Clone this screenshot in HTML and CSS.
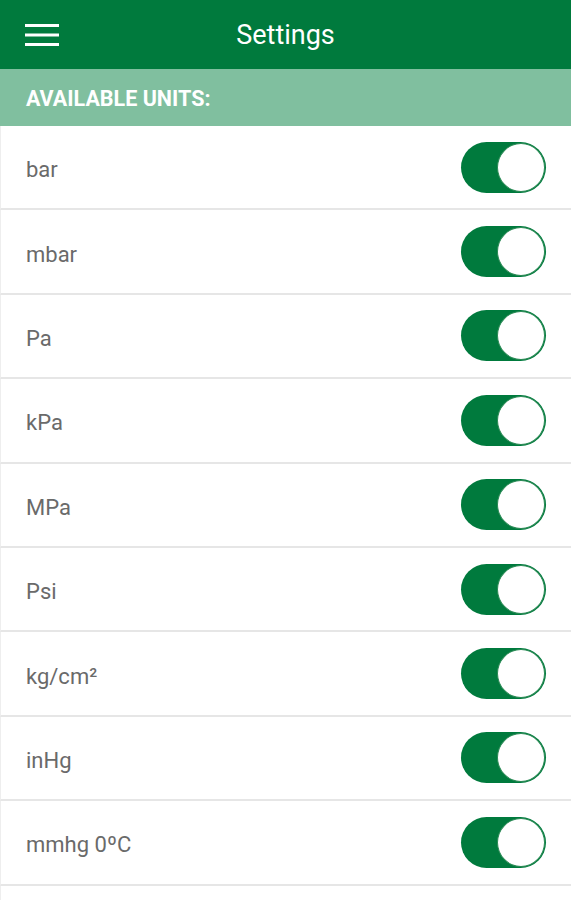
FILE: index.html
```html
<!DOCTYPE html>
<html lang="en">
<head>
  <meta charset="UTF-8">
  <title>Settings</title>
  <link rel="stylesheet" href="styles.css">
</head>
<body>

<!-- top bar -->
<header class="app-bar">
  <span class="menu-btn">
    <svg width="34" height="24" viewBox="0 0 34 24">
      <rect x="0" y="1" width="34" height="3" fill="#fff"/>
      <rect x="0" y="10.5" width="34" height="3" fill="#fff"/>
      <rect x="0" y="20" width="34" height="3" fill="#fff"/>
    </svg>
  </span>
  <h1 class="app-title">Settings</h1>
</header>

<div class="section-head">AVAILABLE UNITS:</div>

<ul class="unit-list">
  <li class="unit-row"><span class="unit-name">bar</span><span class="toggle on"></span></li>
  <li class="unit-row"><span class="unit-name">mbar</span><span class="toggle on"></span></li>
  <li class="unit-row"><span class="unit-name">Pa</span><span class="toggle on"></span></li>
  <li class="unit-row"><span class="unit-name">kPa</span><span class="toggle on"></span></li>
  <li class="unit-row"><span class="unit-name">MPa</span><span class="toggle on"></span></li>
  <li class="unit-row"><span class="unit-name">Psi</span><span class="toggle on"></span></li>
  <li class="unit-row"><span class="unit-name">kg/cm²</span><span class="toggle on"></span></li>
  <li class="unit-row"><span class="unit-name">inHg</span><span class="toggle on"></span></li>
  <li class="unit-row"><span class="unit-name">mmhg 0ºC</span><span class="toggle on"></span></li>
  <!-- next row, only its switch peeks in -->
  <li class="unit-row"><span class="unit-name"></span><span class="toggle on"></span></li>
</ul>

</body>
</html>
```

FILE: styles.css
```css
body {
  margin: 0;
  font-family: Roboto, "Liberation Sans", sans-serif;
  background: #fff;
  height: 900px;
  overflow: hidden;
}
.app-bar {
  height: 69px;
  background-color: #007a3d;
  display: flex;
  align-items: center;
  position: relative;
}
.menu-btn {
  display: flex;
  margin-left: 25px;
}
.app-title {
  position: absolute;
  left: 0;
  right: 0;
  margin: 0;
  text-align: center;
  color: #fff;
  font-size: 27px;
  font-weight: normal;
  pointer-events: none;
}
.section-head {
  height: 57px;
  background-color: #80bf9f;
  color: #fff;
  font-weight: bold;
  font-size: 21.5px;
  display: flex;
  align-items: center;
  padding-left: 26px;
  padding-top: 2px;
  box-sizing: border-box;
}
.unit-list {
  list-style: none;
  margin: 0;
  padding: 0;
}
.unit-row {
  height: 82.4px;
  border-bottom: 2px solid #e6e6e6;
  border-left: 1px solid #eee;
  display: flex;
  align-items: center;
  justify-content: space-between;
  padding: 0 25px 0 25px;
  color: #6a6a6a;
  font-size: 22px;
}
.unit-name {
  padding-top: 5px;
}
.toggle {
  width: 85px;
  height: 51px;
  border-radius: 26px;
  background-color: #007a3d;
  position: relative;
  box-sizing: border-box;
}
.toggle.on::after {
  content: "";
  position: absolute;
  right: 1px;
  top: 1px;
  width: 48px;
  height: 49px;
  border-radius: 50%;
  background: #fff;
  border: 1px solid #2a8a55;
  box-sizing: border-box;
}
```
